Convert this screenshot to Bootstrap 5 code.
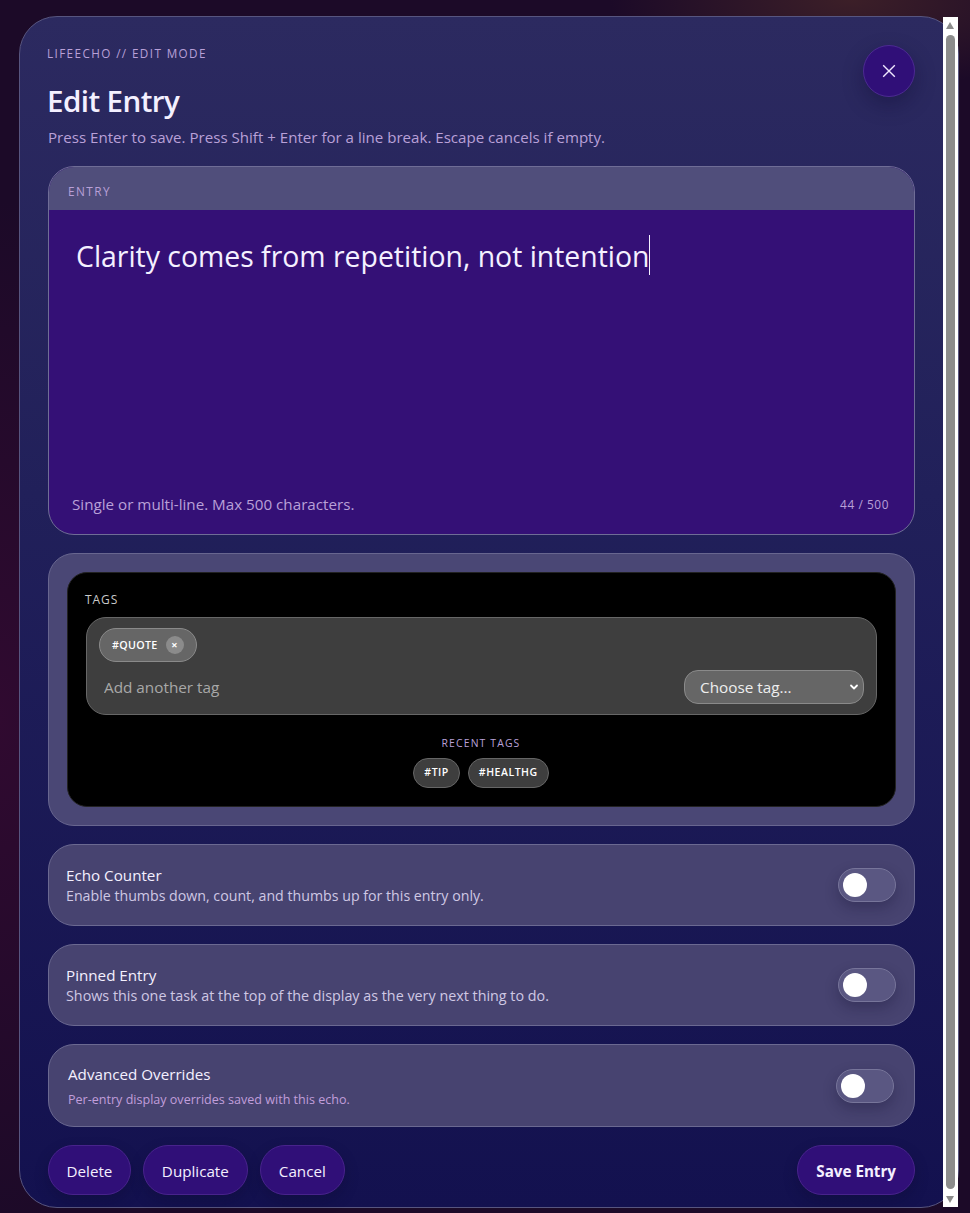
<!DOCTYPE html>
<html lang="en">
<head>
<meta charset="utf-8">
<title>Edit Entry</title>
<link href="https://cdn.jsdelivr.net/npm/bootstrap@5.3.0/dist/css/bootstrap.min.css" rel="stylesheet">
<style>
html,body{height:100%;}
body{margin:0;overflow:hidden;font-family:"Open Sans","Noto Sans",sans-serif;color:#f4f0ff;
  background:
   radial-gradient(240px 90px at 850px 0,#3c1f28 0,rgba(60,31,40,0) 100%),
   radial-gradient(200px 520px at 0 720px,#300a30 0,rgba(48,10,48,0) 100%),
   #1c0a28;}
.stage{padding:16px 11px 5px 19px;height:100%;position:relative;}
.shell{height:1192px;border:1px solid #57557f;border-radius:38px;padding:28px 43px 12px 28px;
  background:linear-gradient(180deg,#2c2a60 0,#21205a 40%,#13114f 100%);gap:18px;}
.eyebrow{font-size:11.7px;line-height:17px;letter-spacing:.12em;color:#b9a0d8;margin-left:-1px;}
.title-x{font-size:29.6px;line-height:38px;font-weight:600;letter-spacing:-.02em;margin:20px 0 0 -1px;color:#f4f0ff;}
.sub-x{font-size:15.1px;line-height:20px;color:#b9a0d8;margin:7px 0 0;padding-bottom:2px;}
.close-x{width:52px;height:52px;border-radius:50%;background:#300f78;border:1px solid #4c2a92;padding:0;box-shadow:0 8px 20px rgba(15,10,50,.35);}
.entry-box{height:369px;border:1px solid #6f6d96;border-radius:26px;overflow:hidden;background:#341076;margin-top:-1px;}
.entry-head{height:43px;background:#504e7b;font-size:11.8px;letter-spacing:.12em;color:#b9a0d8;padding:6px 19px 0;}
.entry-text{font-size:28.4px;line-height:40px;padding:26px 27px 0;color:#f4f0ff;}
.caret-x{display:inline-block;width:1px;height:40px;background:#f4f0ff;vertical-align:top;margin-top:-1px;}
.entry-foot{padding:0 25px 20px 23px;font-size:15.2px;line-height:20px;color:#b9a0d8;}
.count-x{font-size:11.8px;letter-spacing:.05em;}
.tags-wrap{height:273px;border:1px solid #68668f;border-radius:26px;background:#4a4775;padding:18px;}
.tags-in{height:235px;background:#000;border:1px solid #222;border-radius:20px;padding:18px 18px 0 17px;}
.tags-label{font-size:12px;line-height:18px;letter-spacing:.08em;color:#c9c9c9;}
.tag-box{height:98px;margin:8px 0 0 1px;background:#3e3e3e;border:1px solid #676767;border-radius:20px;padding:10px 12px;}
.chip-x{height:34px;border:1px solid #8a8a8a;background:#666;border-radius:17px;padding:0 12px;font-size:10.7px;font-weight:600;letter-spacing:.03em;color:#fff;gap:8px;}
.chip-del{width:18px;height:18px;border-radius:50%;background:#8b8b8b;font-size:11px;line-height:18px;text-align:center;color:#fff;font-weight:700;}
.add-x{background:transparent;border:0;outline:0;padding:0 5px;font-size:15.3px;color:#a8a8a8;flex:1;min-width:0;}
.add-x::placeholder{color:#a8a8a8;opacity:1;}
.pick-x{width:180px;height:34px;border:1px solid #8a8a8a;border-radius:14px;background-color:#666;color:#eee;font-size:15.3px;padding:0 24px 0 15px;line-height:32px;
  background-image:url("data:image/svg+xml,%3csvg xmlns='http://www.w3.org/2000/svg' viewBox='0 0 10 10'%3e%3cpath fill='none' stroke='%23fff' stroke-width='1.8' stroke-linecap='round' stroke-linejoin='round' d='M2 3.5 5 6.5 8 3.5'/%3e%3c/svg%3e");background-size:10px 10px;background-position:right 4px center;}
.recent-label{font-size:10.4px;line-height:14px;letter-spacing:.11em;color:#b9a0d8;margin-top:21px;}
.recent-chip{height:30px;border:1px solid #666;background:#3e3e3e;border-radius:15px;padding:0 10px;font-size:10.5px;font-weight:600;letter-spacing:.05em;color:#fff;}
.opt-row{height:82px;border:1px solid #6b6991;border-radius:26px;background:#474370;padding:0 18px 0 17px;}
.opt-row.opt-last{height:83px;padding:0 20px 0 19px;}
.opt-name{font-size:15.2px;line-height:20px;margin-bottom:1px;color:#f4f0ff;}
.opt-desc{font-size:14.2px;line-height:20px;color:#cfc8e4;}
.opt-desc.opt-wide{font-size:14.33px;}
.opt-note{font-size:12.55px;line-height:16px;color:#c19edb;margin-top:7px;}
.opt-last .opt-name{line-height:22px;margin-bottom:0;}
.form-switch .tog-x{width:58px;height:34px;margin:0;float:none;border:1px solid #77759a;border-radius:17px;background-color:#5a5782;
  background-image:url("data:image/svg+xml,%3csvg xmlns='http://www.w3.org/2000/svg' viewBox='0 0 24 24'%3e%3ccircle cx='12' cy='12' r='12' fill='%23fff'/%3e%3c/svg%3e");background-size:24px 24px;background-position:4px center;box-shadow:0 6px 14px rgba(20,15,50,.3);}
.pad-0{padding:0;}
.act-row{gap:12px;}
.act-x{height:50px;border-radius:25px;background:#300f78;border:1px solid #48238c;color:#f4f0ff;font-size:15.2px;padding:3px 18px 0;box-shadow:0 6px 14px rgba(10,8,40,.25);}
.act-row .act-x:first-child{padding:3px 17.5px 0;}
.act-x.act-save{font-weight:700;}
.act-x:hover{background:#300f78;color:#f4f0ff;border-color:#48238c;}
.bar-x{position:absolute;left:943px;top:17px;width:15px;height:1190px;background:#fff;}
.bar-thumb{position:absolute;left:3px;top:18px;width:9px;height:1154px;background:#8c8c8c;border-radius:5px;}
.bar-up,.bar-dn{position:absolute;left:3px;width:0;height:0;border-left:4.5px solid transparent;border-right:4.5px solid transparent;}
.bar-up{top:5px;border-bottom:7px solid #8c8c8c;}
.bar-dn{bottom:4px;border-top:7px solid #8c8c8c;}
</style>
</head>
<body>
<div class="stage">
  <div class="shell d-flex flex-column">
    <header class="d-flex justify-content-between align-items-start">
      <div>
        <div class="eyebrow">LIFEECHO // EDIT MODE</div>
        <h1 class="title-x">Edit Entry</h1>
        <p class="sub-x">Press Enter to save. Press Shift + Enter for a line break. Escape cancels if empty.</p>
      </div>
      <button class="btn close-x d-flex align-items-center justify-content-center" type="button" aria-label="Close">
        <svg width="14" height="14" viewBox="0 0 14 14"><path d="M1.2 1.2 12.8 12.8M12.8 1.2 1.2 12.8" stroke="#f0e8ff" stroke-width="1.4" fill="none"/></svg>
      </button>
    </header>
    <section class="entry-box d-flex flex-column">
      <div class="entry-head d-flex align-items-center flex-shrink-0">ENTRY</div>
      <div class="entry-text flex-grow-1">Clarity comes from repetition, not intention<span class="caret-x"></span></div>
      <div class="entry-foot d-flex justify-content-between align-items-center">
        <span>Single or multi-line. Max 500 characters.</span>
        <span class="count-x">44 / 500</span>
      </div>
    </section>
    <section class="tags-wrap">
      <div class="tags-in">
        <div class="tags-label">TAGS</div>
        <div class="tag-box d-flex flex-column justify-content-between">
          <div class="d-flex"><span class="chip-x d-inline-flex align-items-center">#QUOTE <span class="chip-del">×</span></span></div>
          <div class="d-flex align-items-center justify-content-between">
            <input class="add-x" type="text" placeholder="Add another tag">
            <select class="form-select pick-x"><option>Choose tag...</option></select>
          </div>
        </div>
        <div class="recent-label text-center">RECENT TAGS</div>
        <div class="d-flex justify-content-center gap-2 mt-2">
          <span class="recent-chip d-inline-flex align-items-center">#TIP</span>
          <span class="recent-chip d-inline-flex align-items-center">#HEALTHG</span>
        </div>
      </div>
    </section>
    <section class="opt-row d-flex align-items-center justify-content-between">
      <div><div class="opt-name">Echo Counter</div><div class="opt-desc">Enable thumbs down, count, and thumbs up for this entry only.</div></div>
      <div class="form-check form-switch pad-0 mb-0 d-flex"><input class="form-check-input tog-x" type="checkbox" role="switch" aria-label="Echo Counter"></div>
    </section>
    <section class="opt-row d-flex align-items-center justify-content-between">
      <div><div class="opt-name">Pinned Entry</div><div class="opt-desc opt-wide">Shows this one task at the top of the display as the very next thing to do.</div></div>
      <div class="form-check form-switch pad-0 mb-0 d-flex"><input class="form-check-input tog-x" type="checkbox" role="switch" aria-label="Pinned Entry"></div>
    </section>
    <section class="opt-row opt-last d-flex align-items-center justify-content-between">
      <div><div class="opt-name">Advanced Overrides</div><div class="opt-note">Per-entry display overrides saved with this echo.</div></div>
      <div class="form-check form-switch pad-0 mb-0 d-flex"><input class="form-check-input tog-x" type="checkbox" role="switch" aria-label="Advanced Overrides"></div>
    </section>
    <footer class="d-flex justify-content-between">
      <div class="d-flex act-row">
        <button class="btn act-x" type="button">Delete</button>
        <button class="btn act-x" type="button">Duplicate</button>
        <button class="btn act-x" type="button">Cancel</button>
      </div>
      <button class="btn act-x act-save" type="button">Save Entry</button>
    </footer>
  </div>
  <div class="bar-x" aria-hidden="true"><span class="bar-up"></span><span class="bar-thumb"></span><span class="bar-dn"></span></div>
</div>
<script src="https://cdn.jsdelivr.net/npm/bootstrap@5.3.0/dist/js/bootstrap.bundle.min.js"></script>
</body>
</html>
